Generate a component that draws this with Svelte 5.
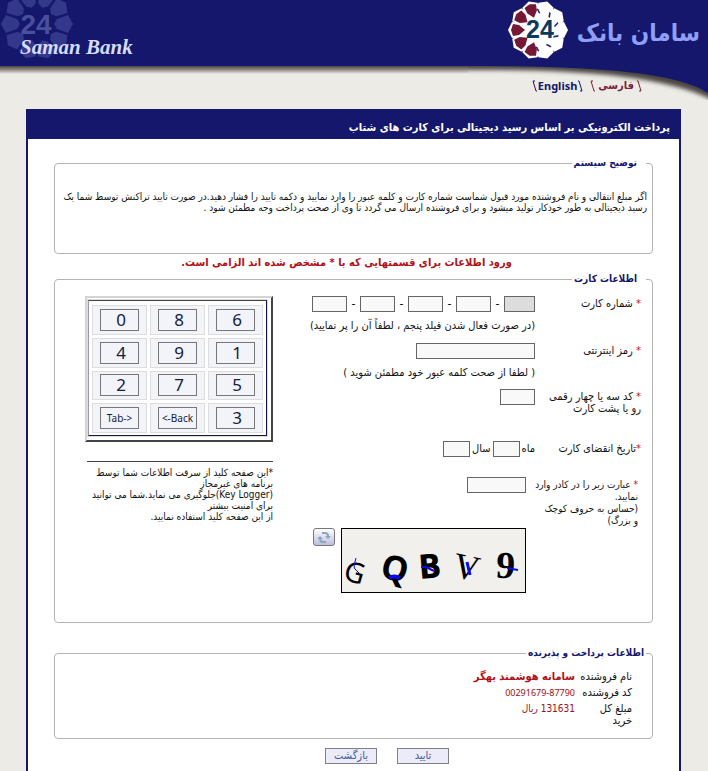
<script>
  const keys = [
    ['0', '8', '6'],
    ['4', '9', '1'],
    ['2', '7', '5'],
    ['Tab->', '<-Back', '3']
  ];
  const petals = [0, 1, 2, 3, 4, 5, 6, 7, 8, 9];
  const cardParts = [4, 3, 2, 1];
</script>

<div class="page">
  <header>
    <div class="bar">
      <div class="brand">
        <svg class="ghost" width="78" height="66" viewBox="0 0 78 66" aria-hidden="true">
          {#each petals as p}
            <polygon points="37,-12 46,-7 42,4 37,7 32,4 28,-7" fill="#34388a" transform={`rotate(${p * 36 + 18} 37 24)`} />
          {/each}
          <text x="36" y="34" text-anchor="middle" class="ghostnum">24</text>
        </svg>
        <span class="script">Saman Bank</span>
      </div>
      <div class="logo">
        <svg width="60" height="60" viewBox="0 0 60 60" role="img" aria-label="24">
          <circle cx="30" cy="30" r="25" fill="#fff" />
          {#each petals as p}
            <polygon points="30,0 38,4 37,16 30,20 23,16 22,4" fill="#fff" transform={`rotate(${p * 36 + 18} 30 30)`} />
          {/each}
          {#each [0, 1, 2, 3, 4, 5] as p}
            <path d="M29 9 h1 l2 4 -1 0z" fill="#14176b" stroke="#14176b" stroke-width="0.6" transform={`rotate(${p * 36} 30 30)`} />
          {/each}
          {#each [5, 6, 7, 8, 9] as p}
            <polygon points="24,5 30,3 36,5 35,11 30,17 25,11" fill="#741835" transform={`rotate(${p * 36 + 18} 30 30)`} />
          {/each}
          <text x="32" y="38" text-anchor="middle" class="num">24</text>
        </svg>
        <strong dir="rtl">سامان بانک</strong>
      </div>
    </div>
    <div class="edge">
      <div class="shade"></div>
      <svg width="240" height="34" viewBox="0 0 240 34" aria-hidden="true">
        <defs>
          <filter id="soft" x="-10%" y="-50%" width="120%" height="200%" color-interpolation-filters="sRGB"><feGaussianBlur stdDeviation="2" /></filter>
        </defs>
        <path d="M-20 -9 V4 H10 C110 4 200 9 250 37 V-9Z" fill="#4b4642" filter="url(#soft)" />
        <path d="M0 0 C100 0 205 3 240 27 V0Z" fill="#14176b" />
      </svg>
    </div>
  </header>

  <nav>
    <a class="en" href="#en">
      <svg width="5" height="12" viewBox="0 0 5 12" aria-hidden="true"><path d="M3 1H1L4 11H5" /></svg>English<svg width="5" height="12" viewBox="0 0 5 12" aria-hidden="true"><path d="M0 1H1L4 11H2" /></svg>
    </a>
    <a class="fa" href="#fa">
      <svg width="5" height="12" viewBox="0 0 5 12" aria-hidden="true"><path d="M3 1H1L4 11H5" /></svg><span dir="rtl">فارسی</span><svg width="5" height="12" viewBox="0 0 5 12" aria-hidden="true"><path d="M0 1H1L4 11H2" /></svg>
    </a>
  </nav>

  <main dir="rtl">
    <h1>پرداخت الکترونیکی بر اساس رسید دیجیتالی برای کارت های شتاب</h1>
    <form onsubmit={(e) => e.preventDefault()}>
      <fieldset class="about">
        <legend>توضیح سیستم</legend>
        <p>
          اگر مبلغ انتقالی و نام فروشنده مورد قبول شماست شماره کارت و کلمه عبور را وارد نمایید و دکمه تایید را فشار دهید.در صورت تایید تراکنش توسط شما یک<br />
          رسید دیجیتالی به طور خودکار تولید میشود و برای فروشنده ارسال می گردد تا وی از صحت پرداخت وجه مطمئن شود .
        </p>
      </fieldset>

      <p class="notice">ورود اطلاعات برای قسمتهایی که با * مشخص شده اند الزامی است.</p>

      <fieldset class="card">
        <legend>اطلاعات کارت</legend>
        <div class="cols">
          <div class="fields">
            <div class="row r1">
              <label for="c5"><i>*</i> شماره کارت</label>
              <div>
                <div class="line">
                  <input id="c5" class="w31 off" disabled />
                  {#each cardParts as n}
                    <span class="dash">-</span><input class="w35" aria-label={`بخش ${n}`} />
                  {/each}
                </div>
                <p class="hint">(در صورت فعال شدن فیلد پنجم ، لطفاً آن را پر نمایید)</p>
              </div>
            </div>
            <div class="row r2">
              <label for="pin"><i>*</i> رمز اینترنتی</label>
              <div>
                <div class="line"><input id="pin" class="w119" type="password" /></div>
                <p class="hint">( لطفا از صحت کلمه عبور خود مطمئن شوید )</p>
              </div>
            </div>
            <div class="row r3">
              <label for="cvv"><i>*</i> کد سه یا چهار رقمی<br />رو یا پشت کارت</label>
              <div class="line"><input id="cvv" class="w35" /></div>
            </div>
            <div class="row r4">
              <span class="label"><i>*</i>تاریخ انقضای کارت</span>
              <div class="line date">
                <label for="mm">ماه</label><input id="mm" class="w27" />
                <label for="yy">سال</label><input id="yy" class="w27" />
              </div>
            </div>
            <div class="row r5">
              <label for="cap"><i>*</i> عبارت زیر را در کادر وارد<br />نمایید.<br />(حساس به حروف کوچک<br />و بزرگ)</label>
              <div>
                <div class="line"><input id="cap" class="w59" /></div>
                <div class="captcha">
                  <svg class="code" width="185" height="65" viewBox="0 0 185 65" role="img" aria-label="captcha">
                    <rect x="0.5" y="0.5" width="184" height="64" fill="#f1f0ed" stroke="#000" />
                    <g direction="ltr" text-anchor="middle">
                      <text class="g1" transform="translate(11 54) rotate(16)">G</text>
                      <text class="g2" transform="translate(51 52) rotate(14)">Q</text>
                      <text class="g3" transform="translate(90 50) rotate(-5)">B</text>
                      <text class="g4" transform="translate(123 51) rotate(12)">V</text>
                      <text class="g5" transform="translate(164 50) rotate(3)">9</text>
                    </g>
                    <g fill="none" stroke="#0a0ae6">
                      <path d="M15 30 Q12 40 14 41 L18 45" />
                      <path d="M48 50 Q53 47 59 50" stroke-width="4" />
                      <path d="M80 39 H85 L93 43" stroke-width="2" />
                      <path d="M126 34 L129 47" stroke-width="3" />
                      <path d="M166 40 L177 42" stroke-width="2" />
                    </g>
                  </svg>
                  <button type="button" class="reload" aria-label="تصویر جدید">
                    <svg width="14" height="13" viewBox="0 0 14 13" aria-hidden="true">
                      <g fill="none" stroke="#8ba6bf" stroke-width="2">
                        <path d="M5 2 H8 Q11 2 11 5 V6" />
                        <path d="M9 11 H6 Q3 11 3 8 V7" />
                      </g>
                      <path d="M8 5 h6 l-3 3z M6 8 h-6 l3 -3z" fill="#8ba6bf" />
                    </svg>
                  </button>
                </div>
              </div>
            </div>
          </div>

          <aside>
            <div class="pad" dir="ltr">
              <div class="grid">
                {#each keys as line}
                  {#each line as k}
                    <div class="cell"><button type="button" class:word={k.length > 1}>{k}</button></div>
                  {/each}
                {/each}
              </div>
            </div>
            <hr />
            <p class="note">
              *این صفحه کلید از سرقت اطلاعات شما توسط<br />
              برنامه های غیرمجاز<br />
              (Key Logger)جلوگیری می نماید.شما می توانید<br />
              برای امنیت بیشتر<br />
              از این صفحه کلید استفاده نمایید.
            </p>
          </aside>
        </div>
      </fieldset>

      <fieldset class="pay">
        <legend>اطلاعات پرداخت و پذیرنده</legend>
        <dl>
          <dt>نام فروشنده</dt><dd><b>سامانه هوشمند بهگر</b></dd>
          <dt>کد فروشنده</dt><dd class="small"><bdi dir="ltr">00291679-87790</bdi></dd>
          <dt>مبلغ کل<br />خرید</dt><dd class="sum">131631 ریال</dd>
        </dl>
      </fieldset>

      <div class="actions">
        <button>تایید</button>
        <button type="button">بازگشت</button>
      </div>
    </form>
  </main>
</div>

<style>
  :global(body) { margin: 0; background: #ecebe6; }
  .page {
    font: 11px/12px "DejaVu Sans Condensed", "DejaVu Sans", sans-serif;
    color: #111;
    overflow: hidden;
    height: 100vh;
    display: flex;
    flex-direction: column;
  }
  p, h1, dl, dd { margin: 0; }
  input, button { box-sizing: border-box; font: inherit; margin: 0; padding: 0; border-radius: 0; }
  .bar { background: #14176b; height: 66px; display: flex; justify-content: space-between; }
  .brand { display: flex; position: relative; }
  .ghost { display: block; }
  .ghostnum { font: bold 28px "Liberation Sans", sans-serif; fill: #4b4f9b; }
  .script {
    position: absolute; left: 20px; top: 37px; white-space: nowrap;
    font: italic bold 21px/20px "Liberation Serif", serif; color: #d5dcff;
  }
  .logo { display: flex; align-items: flex-start; gap: 9px; padding-right: 8px; }
  .logo svg { display: block; }
  .num { font: bold 25px "Liberation Sans", sans-serif; fill: #0c3a5c; }
  .logo strong { font: bold 24px/66px "DejaVu Sans Condensed", "DejaVu Sans", sans-serif; color: #8f9ff5; white-space: nowrap; }
  .edge { display: flex; height: 10px; }
  .shade { flex: 1; height: 8px; background: linear-gradient(#4b4642, #8d8985 45%, #ecebe6); }
  .edge svg { display: block; flex: none; }
  nav { display: flex; justify-content: flex-end; gap: 7px; padding-right: 66px; height: 33px; }
  nav a { position: relative; display: flex; align-items: center; gap: 1px; height: 19px; font-weight: bold; font-size: 11px; text-decoration: none; }
  nav svg path { fill: none; stroke: currentColor; }
  .en { color: #14176b; font-family: "Noto Sans", sans-serif; }
  .fa { color: #7a2038; gap: 3px; }

  main { flex: 1; margin: 0 27px 0 26px; background: #fff; border: solid #14176b; border-width: 0 2px; }
  h1 { height: 30px; background: #14176b; color: #fff; font-weight: bold; font-size: 11px; line-height: 38px; padding-right: 9px; white-space: nowrap; }
  form { padding: 16px 26px 0; }
  fieldset { box-sizing: border-box; margin: 0; min-width: 0; border: 1px solid #b4b4b4; border-radius: 4px; padding: 0; }
  legend { color: #14176b; font-weight: bold; font-size: 10px; line-height: 16px; padding: 0 9px 0 2px; margin-right: 6px; }
  .about { height: 99px; }
  .about p { padding: 20px 5px 0; font-size: 10px; line-height: 11px; white-space: nowrap; }
  .notice { text-align: center; color: #b01116; font-weight: bold; font-size: 11px; line-height: 17px; padding-right: 14px; }

  .card { height: 352px; }
  .cols { display: flex; justify-content: space-between; padding: 9px 11px 0 30px; }
  .fields { flex: 1; }
  .row { display: grid; grid-template-columns: 106px 1fr; white-space: nowrap; }
  .row > label, .label { padding-top: 2px; }
  i { font-style: normal; color: #c01818; }
  .r1 { height: 47px; }
  .r2 { height: 46px; }
  .r3 { height: 52px; }
  .r4 { height: 36px; }
  .r5 { grid-template-columns: 112px 1fr; padding-right: 3px; }
  .line { display: flex; height: 16px; align-items: center; }
  .line input { height: 16px; border: 1px solid #666; background: #f9f9f9; outline: 0; }
  .line .off { background: #ddd; }
  .dash { width: 13px; text-align: center; font-size: 12px; }
  .w27 { width: 27px; } .w31 { width: 31px; } .w35 { width: 35px; } .w59 { width: 59px; } .w119 { width: 119px; }
  .hint { padding-top: 8px; }
  .date { gap: 2px; }
  .captcha { display: flex; gap: 6px; align-items: flex-start; height: 65px; margin-top: 35px; }
  .r5 > label { height: 48px; font-size: 10px; }
  .code { display: block; flex: none; }
  .g1 { font: 28px "Noto Sans", sans-serif; }
  .g2 { font: bold 34px "Noto Sans", sans-serif; }
  .g3 { font: bold 33px "DejaVu Sans Condensed", sans-serif; }
  .g4 { font: 36px "Liberation Serif", serif; }
  .g5 { font: bold 38px "Liberation Serif", serif; }
  .reload {
    width: 22px; height: 18px; border: 1px solid #777; border-radius: 3px;
    background: linear-gradient(#fff, #bcbedc); display: flex; align-items: center; justify-content: center;
  }

  aside { width: 188px; flex: none; }
  .pad { box-sizing: border-box; height: 146px; border: 2px solid; border-color: #d4d4d4 #444 #444 #d4d4d4; padding: 2px 4px 4px 1px; }
  .grid {
    box-sizing: border-box; height: 100%; border: 1px solid; border-color: #444 #14144a #14144a #99a; padding: 4px 3px 2px;
    display: grid; grid-template-columns: repeat(3, 1fr); gap: 3px; outline: 1px solid #ddd;
  }
  .cell { border: 1px solid #ddd; background: #f3f4f9; display: flex; align-items: center; justify-content: center; min-height: 0; }
  .cell button { width: 39px; height: 22px; border: 1px solid #777; background: #f3f4f9; color: #14203c; font-family: "Noto Sans", sans-serif; font-size: 17px; line-height: 20px; padding-left: 3px; }
  .cell .word { width: auto; min-width: 39px; font-size: 10px; padding: 0 3px; }
  hr { border: 0; border-top: 1px solid #444; margin: 19px 0 0 2px; }
  .note { padding-top: 5px; font-size: 10px; line-height: 11px; white-space: nowrap; }

  .pay { height: 94px; margin-top: 22px; }
  .pay legend { padding-right: 2px; }
  dl { display: grid; grid-template-columns: 57px 1fr; row-gap: 4px; padding: 10px 20px 0 0; }
  dd { color: #9c1015; }
  .small { font-size: 9px; font-family: "Noto Sans", sans-serif; }
  .sum { font-size: 10px; }
  dd b { font-size: 11px; color: #b01116; }
  .actions { display: flex; justify-content: center; gap: 20px; padding: 9px 0 0 67px; }
  .actions button { width: 52px; height: 16px; border: 1px solid #808088; background: #ebebfa; color: #3a5a94; line-height: 14px; }
</style>
